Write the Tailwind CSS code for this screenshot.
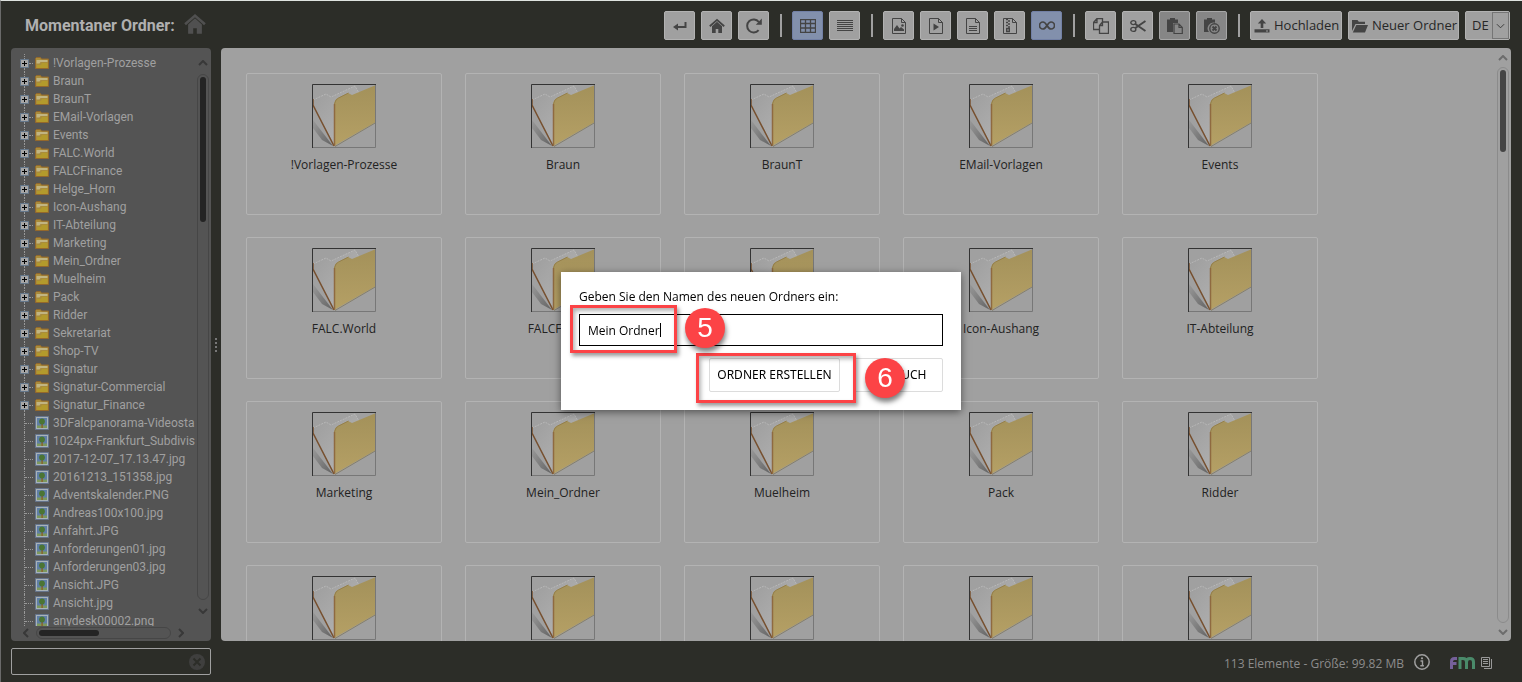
<!DOCTYPE html>
<html lang="de">
<head>
<meta charset="utf-8"/>
<meta content="width=device-width, initial-scale=1.0" name="viewport"/>
<title>Dateimanager</title>
<script src="https://cdn.jsdelivr.net/npm/@tailwindcss/browser@4"></script>
</head>
<body class="h-screen overflow-hidden flex flex-col bg-[#2c2d28] border-t border-t-[#dfe3e0] border-l border-l-[#6a6a6a] font-['Open_Sans',sans-serif] text-xs text-[#a0a0a0]">

<!-- Icons -->
<svg class="absolute w-0 h-0">
  <defs>
    <linearGradient id="gold" x2="0" y2="1"><stop stop-color="#a3915a"/><stop offset="1" stop-color="#b5a065"/></linearGradient>
    <linearGradient id="paper" x2="1" y2="1"><stop stop-color="#9c9c9c"/><stop offset="1" stop-color="#b7b7b7"/></linearGradient>
    <linearGradient id="shade" x2="1" y2="1"><stop stop-color="#999"/><stop offset="1" stop-color="#626262"/></linearGradient>
  </defs>
  <symbol id="i-enter" viewBox="0 0 16 16"><path d="M13.500 4v5H4" fill="none" stroke="currentColor" stroke-width="2"/><path d="M6 5.500 1 9l5 3.500z" fill="currentColor"/></symbol>
  <symbol id="i-home" viewBox="0 0 16 16"><path d="M8 3.800 3 8.300V15h3.700v-4h2.600v4H13V8.300z" fill="currentColor"/><path d="M.8 8.200 8 1.900l7.200 6.300" fill="none" stroke="currentColor" stroke-width="1.900"/></symbol>
  <symbol id="i-refresh" viewBox="0 0 16 16"><path d="M12.600 12.200A6.500 6.500 0 1 1 12.800 4" fill="none" stroke="currentColor" stroke-width="2"/><path d="M15.800.5v6.300H9.800z" fill="currentColor"/></symbol>
  <symbol id="i-grid" viewBox="0 0 16 14"><path d="M.5.5h15v13H.5zM.5 4.500h15M.5 9h15M5.500.5v13M10.500.5v13" fill="none" stroke="currentColor" stroke-width="1.300"/></symbol>
  <symbol id="i-list" viewBox="0 0 16 12"><path d="M0 .5h16M0 2.500h16M0 4.500h16M0 6.500h16M0 8.500h16M0 10.500h16" stroke="currentColor"/></symbol>
  <symbol id="i-image" viewBox="0 0 14 16"><path d="M.5.500h9l4 4v11H.5zM9.500.500v4h4" fill="none" stroke="currentColor"/><path d="M2 13V11l3-4 2.500 3.500L9 9l3 2.500V13z" fill="currentColor"/><circle cx="10.500" cy="7.500" r="1.300" fill="currentColor"/></symbol>
  <symbol id="i-video" viewBox="0 0 14 16"><path d="M.5.500h9l4 4v11H.5zM9.500.500v4h4" fill="none" stroke="currentColor"/><path d="M4.500 5.500v7l5.500-3.500z" fill="currentColor"/></symbol>
  <symbol id="i-text" viewBox="0 0 14 16"><path d="M.5.500h9l4 4v11H.5zM9.500.500v4h4" fill="none" stroke="currentColor"/><path d="M3 8.500h8M3 10.500h8M3 12.500h8" stroke="currentColor"/></symbol>
  <symbol id="i-zip" viewBox="0 0 14 16"><path d="M.5.500h9l4 4v11H.5zM9.500.500v4h4" fill="none" stroke="currentColor"/><path d="M3 1.500h2M5 3h2M3 4.500h2M5 6h2M3 7.500h2M5 9h2" stroke="currentColor" stroke-width="1.300"/><path d="M3.700 10.500h2.600v3H3.700z" fill="none" stroke="currentColor" stroke-width="1.400"/></symbol>
  <symbol id="i-infinity" viewBox="0 0 16 9"><path d="M8 4.500C6.800 2.500 5.600 1 4 1a3.400 3.400 0 0 0 0 7c1.600 0 2.800-1.500 4-3.500S10.400 1 12 1a3.400 3.400 0 0 1 0 7c-1.600 0-2.800-1.500-4-3.500z" fill="none" stroke="currentColor" stroke-width="1.700"/></symbol>
  <symbol id="i-copy" viewBox="0 0 16 16"><path d="M6.500 11.500h-6v-7l3.500-4h5.500V4M4 .5v4H.5M9.500 4h6v11.500h-9V7.500zM9.500 4v3.500h-3" fill="none" stroke="currentColor" stroke-width="1.300"/></symbol>
  <symbol id="i-cut" viewBox="0 0 16 14"><path d="M5.300 5 15.500 12M5.300 9 15.500 2" stroke="currentColor" stroke-width="2"/><ellipse cx="3.300" cy="3.600" rx="2.500" ry="2" fill="none" stroke="currentColor" stroke-width="1.400"/><ellipse cx="3.300" cy="10.400" rx="2.500" ry="2" fill="none" stroke="currentColor" stroke-width="1.400"/></symbol>
  <symbol id="i-paste" viewBox="0 0 16 16"><path d="M0 1.500h3V0h5v1.500h3V5H6v9H0z" fill="currentColor"/><path d="M7 6h5l3.300 3.500v6H7zM12 6v3.500h3.300" fill="none" stroke="currentColor" stroke-width="1.200"/></symbol>
  <symbol id="i-clear" viewBox="0 0 16 16"><path d="M0 1.500h3V0h5v1.500h3v3.200A5.800 5.800 0 0 0 5 14H0z" fill="currentColor"/><circle cx="10.500" cy="10.500" r="4.700" fill="none" stroke="currentColor" stroke-width="1.400"/><path d="m8.500 8.500 4 4m0-4-4 4" stroke="currentColor" stroke-width="1.900"/></symbol>
  <symbol id="i-upload" viewBox="0 0 16 14"><path d="M8 0 3.800 4.500h2.900V9h2.600V4.500h2.900zM.5 10.200h15v3.300H.5z" fill="currentColor"/><path d="M12 12h2" stroke="#a0a0a0"/></symbol>
  <symbol id="i-open" viewBox="0 0 16 14"><path d="M0 12V1h5.500l1.300 1.700H13V5H3.500z" fill="currentColor"/><path d="M4.300 6H16l-3 7.500H.8z" fill="currentColor"/></symbol>
  <symbol id="i-chevron" viewBox="0 0 10 6"><path d="m1 1 4 4 4-4" fill="none" stroke="currentColor" stroke-width="2"/></symbol>
  <symbol id="i-folder" viewBox="0 0 14 12"><path d="M.5 1.500 1.500.5h4l1 1.500h7v9.500H.5z" fill="#a98c3c" stroke="#94682b"/><path d="M1.500 3h11v2h-7l-1 1.500h-3z" fill="#c1b482"/><path d="M2 8h4l1-2h5.500v5H2z" fill="#b39a2c"/></symbol>
  <symbol id="i-pic" viewBox="0 0 14 14"><path d="M.5.500h13v13H.5z" fill="#a9b2b8" stroke="#65748c"/><path d="M2 2h10v10H2z" fill="#5f7ea6"/><path d="M2 9.500h10V12H2z" fill="#7d985c"/><path d="M6.400 8h1.400v4H6.400z" fill="#8b5c2a"/><circle cx="7" cy="5.500" r="2.900" fill="#4b7534"/></symbol>
  <symbol id="i-bigfolder" viewBox="0 0 64 64">
    <path d="M1 36 21 62 10 56 1 44z" fill="url(#shade)"/>
    <path d="M1 16 14 10l5 3L43 2l5 8-25 52L1 21z" fill="url(#paper)"/>
    <path d="M1 16 14 10l5 3L43 2l4 7" fill="none" stroke="#b8b8b8" stroke-dasharray="2 1"/>
    <path d="M1 15v6l21 41" fill="none" stroke="#77502f" stroke-width="1.500"/>
    <path d="M22 62V20q1-5 4-6l10-5 4 2L64 1v37z" fill="url(#gold)"/>
    <path d="M22.500 62V20" fill="none" stroke="#8f6a40" stroke-width="1.500"/>
    <path d="M22.500 20q1-5 4-6l10-5" fill="none" stroke="#95804c"/>
    <path d="M23 62.500 64 38.500" stroke="#857f6c"/>
    <path d="M.5 64V.5H64" fill="none" stroke="#333"/><path d="M63.500 1v62.500H1" fill="none" stroke="#777"/>
  </symbol>
</svg>

<header class="h-[47px] shrink-0 flex items-center pl-6 pr-3 pt-[2px]">
  <h1 class="text-base font-bold font-['Roboto',sans-serif] text-[#b0b0b0]">Momentaner Ordner:</h1>
  <svg class="w-[22px] h-[22px] ml-[9px] mb-1 text-[#505050]"><use href="#i-home"/></svg>
  <div id="toolbar" class="ml-auto flex items-center gap-[6px] text-[13px] text-[#272727]"></div>
</header>

<main class="flex-1 min-h-0 flex pl-[10px] pr-[11px]">
  <aside class="w-[200px] shrink-0 flex flex-col rounded-sm bg-[#545454] text-[#a0a0a0] font-['Roboto',sans-serif]">
    <div class="flex-1 min-h-0 flex">
      <ul id="tree" class="flex-1 min-w-0 overflow-hidden pt-[6px] pl-[9px]"></ul>
      <div class="w-[14px] mr-[1px] pt-3 flex flex-col items-center gap-2 text-[#383838]">
        <svg class="w-[10px] h-[6px] rotate-180"><use href="#i-chevron"/></svg>
        <div class="w-3 flex-1 rounded-full border border-[#464646] p-[2px]"><div class="h-[145px] rounded-full bg-[#242424]"></div></div>
        <svg class="w-[10px] h-[6px] mb-3"><use href="#i-chevron"/></svg>
      </div>
    </div>
    <div class="h-[15px] flex items-center pl-[10px] gap-[5px] pb-[2px] text-[#383838]">
      <svg class="w-[10px] h-[6px] rotate-90"><use href="#i-chevron"/></svg>
      <div class="w-[135px] h-3 rounded-full border border-[#464646] p-[2px]"><div class="w-[60px] h-[6px] rounded-full bg-[#242424]"></div></div>
      <svg class="w-[10px] h-[6px] -rotate-90"><use href="#i-chevron"/></svg>
    </div>
  </aside>
  <div class="w-[10px] flex items-center justify-center"><div class="h-[14px] border-l-2 border-dotted border-[#777]"></div></div>
  <section class="flex-1 min-w-0 flex rounded-sm bg-[#a0a0a0] overflow-hidden">
    <div id="files" class="flex-1 overflow-hidden flex flex-wrap content-start gap-x-[23px] gap-y-[22px] pt-[25px] pl-[25px] pr-[150px]"></div>
    <div class="w-[14px] mr-[1px] pt-[7px] flex flex-col items-center gap-[6px] text-[#6c6c6c]">
      <svg class="w-[10px] h-[6px] rotate-180"><use href="#i-chevron"/></svg>
      <div class="w-3 flex-1 rounded-full border border-[#8b8b8b] p-[2px]"><div class="h-[82px] rounded-full bg-[#444]"></div></div>
      <svg class="w-[10px] h-[6px] mb-[6px]"><use href="#i-chevron"/></svg>
    </div>
  </section>
</main>

<footer class="h-[41px] shrink-0 flex items-center pl-[10px] pr-[30px]">
  <div class="w-[200px] h-[27px] flex items-center border border-[#a0a0a0] rounded-xs pr-[5px]">
    <input id="filter" type="text" aria-label="Filter" class="flex-1 min-w-0 h-full px-2 outline-none"/>
    <button aria-label="Filter löschen"><svg class="w-4 h-4" viewBox="0 0 16 16"><circle cx="8" cy="8" r="8" fill="#3f3f3e"/><path d="m4.500 4.500 7 7m0-7-7 7" stroke="#2c2d28" stroke-width="2"/></svg></button>
  </div>
  <div class="ml-auto flex items-center">
    <span class="text-[#8c8c8c] pt-1">113 Elemente - Größe: 99.82 MB</span>
    <button aria-label="Info" class="ml-[10px]"><svg class="w-4 h-4" viewBox="0 0 16 16"><circle cx="8" cy="8" r="7.200" fill="none" stroke="#a0a0a0" stroke-width="1.500"/><path d="M6.500 7h2v4.500M6.300 11.800h3.600" fill="none" stroke="#a0a0a0" stroke-width="1.400"/><circle cx="8" cy="4.300" r="1.100" fill="#a0a0a0"/></svg></button>
    <!-- Brand mark -->
    <svg class="w-[25px] h-3 ml-5 mt-[2px]" viewBox="0 0 25 12" fill="none" stroke-width="3"><path d="M1.500 12V4.500q0-3 3-3H7M1.500 6.500H6.500" stroke="#75609a"/><path d="M10 12V1.500h3q3.500 0 3.500 3.500v7M16.500 5q0-3.500 3.500-3.500T23.500 5v7" stroke="#4a8a6a"/></svg>
    <svg class="w-[11px] h-3 ml-[6px] mt-[2px]" viewBox="0 0 11 12" fill="none" stroke="#999"><path d="M.5.500h8v9h-8zM2 2.500h5M2 4.500h5M2 6.500h5M10.500 2v9.500H3"/></svg>
  </div>
</footer>

<!-- New folder prompt -->
<div class="fixed inset-0 flex items-center justify-center text-black">
  <form role="dialog" class="relative w-[400px] bg-white px-[18px] pt-4 pb-[18px] shadow-[0_2px_8px_rgba(0,0,0,0.500)]" onsubmit="return false">
    <label for="folderName" class="block leading-[18px] mb-2">Geben Sie den Namen des neuen Ordners ein:</label>
    <input id="folderName" type="text" value="Mein Ordner" class="block w-full h-8 border border-black px-2 outline-none"/>
    <div class="flex justify-end gap-[14px] mt-3 font-['Noto_Sans',sans-serif]">
      <button type="submit" class="h-[34px] w-[131px] border border-[#dcdcdc] rounded-xs whitespace-nowrap">ORDNER ERSTELLEN</button>
      <button type="button" class="h-[34px] w-[89px] border border-[#dcdcdc] rounded-xs">ABBRUCH</button>
    </div>
    <!-- text caret -->
    <div class="absolute left-[99px] top-[51px] w-px h-[14px] bg-black"></div>
    <!-- step markers -->
    <div class="absolute left-[9px] top-[33px] w-[107px] h-12 border-3 border-[#fc4346] shadow-[2px_3px_4px_rgba(0,0,0,0.400),inset_2px_3px_4px_rgba(0,0,0,0.300)]"></div>
    <div class="absolute left-[135px] top-[81px] w-40 h-[50px] border-3 border-[#fc4346] shadow-[2px_3px_4px_rgba(0,0,0,0.400),inset_2px_3px_4px_rgba(0,0,0,0.300)]"></div>
    <div class="absolute left-[124px] top-9 size-10 rounded-full bg-[#fc4346] flex items-center justify-center text-white text-[28px] font-['Liberation_Sans',sans-serif] shadow-[1px_4px_5px_rgba(0,0,0,0.500)]">5</div>
    <div class="absolute left-[304px] top-[86px] size-10 rounded-full bg-[#fc4346] flex items-center justify-center text-white text-[28px] font-['Liberation_Sans',sans-serif] shadow-[1px_4px_5px_rgba(0,0,0,0.500)]">6</div>
  </form>
</div>

<script>
  const folders = ["!Vorlagen-Prozesse", "Braun", "BraunT", "EMail-Vorlagen", "Events", "FALC.World", "FALCFinance", "Helge_Horn", "Icon-Aushang", "IT-Abteilung", "Marketing", "Mein_Ordner", "Muelheim", "Pack", "Ridder", "Sekretariat", "Shop-TV", "Signatur", "Signatur-Commercial", "Signatur_Finance"];
  const images = ["3DFalcpanorama-Videosta", "1024px-Frankfurt_Subdivis", "2017-12-07_17.13.47.jpg", "20161213_151358.jpg", "Adventskalender.PNG", "Andreas100x100.jpg", "Anfahrt.JPG", "Anforderungen01.jpg", "Anforderungen03.jpg", "Ansicht.JPG", "Ansicht.jpg", "anydesk00002.png"];

  // [icon, label, svg size, state]
  const tools = [
    ["enter", "Zurück", "w-4 h-4"], ["home", "Start", "w-4 h-4"], ["refresh", "Aktualisieren", "w-4 h-4"], null,
    ["grid", "Kacheln", "w-4 h-[14px]", "on"], ["list", "Liste", "w-4 h-3"], null,
    ["image", "Bilder", "w-[14px] h-4"], ["video", "Videos", "w-[14px] h-4"], ["text", "Dokumente", "w-[14px] h-4"], ["zip", "Archive", "w-[14px] h-4"], ["infinity", "Alle", "w-4 h-[9px]", "on"], null,
    ["copy", "Kopieren", "w-4 h-4"], ["cut", "Ausschneiden", "w-4 h-[14px]"], ["paste", "Einfügen", "w-4 h-4", "off"], ["clear", "Leeren", "w-4 h-4", "off"], null
  ];
  const look = {
    on: "bg-[#8290ac] border-[#7280a5]",
    off: "bg-[#868686] border-[#a6a6a6]",
    normal: "bg-[#a0a0a0] border-[#b2b2b2]"
  };

  document.getElementById("toolbar").innerHTML = tools.map(t => t
    ? `<button aria-label="${t[1]}" class="w-[31px] h-[29px] flex items-center justify-center border rounded-xs text-[#444] ${look[t[3] || "normal"]}"><svg class="${t[2]}"><use href="#i-${t[0]}"/></svg></button>`
    : `<div class="w-[2px] h-[23px] bg-[#a0a0a0] ml-[5px] mr-1"></div>`
  ).join("") + `
    <button class="w-[92px] h-[29px] flex items-center gap-1 px-[3px] border rounded-xs bg-[#a0a0a0] border-[#b2b2b2]"><svg class="w-4 h-[14px] shrink-0 text-[#444]"><use href="#i-upload"/></svg>Hochladen</button>
    <button class="w-[111px] h-[29px] flex items-center gap-1 px-[3px] border rounded-xs bg-[#a0a0a0] border-[#b2b2b2] whitespace-nowrap"><svg class="w-4 h-[14px] shrink-0 text-[#444]"><use href="#i-open"/></svg>Neuer Ordner</button>
    <div class="relative w-[45px] h-[29px] border rounded-xs bg-[#a0a0a0] border-[#b2b2b2]">
      <select aria-label="Sprache" class="w-full h-full appearance-none pl-[6px] outline-none"><option>DE</option></select>
      <span class="absolute right-0 inset-y-0 w-[17px] border border-[#757575] flex items-center justify-center pointer-events-none"><svg class="w-[9px] h-[6px]" viewBox="0 0 10 6"><path d="m1 1 4 4 4-4" fill="none" stroke="#333"/></svg></span>
    </div>`;

  document.getElementById("tree").innerHTML = folders.map(name => `
    <li class="h-[18px] flex items-center whitespace-nowrap">
      <span class="w-[9px] h-full flex flex-col items-center"><i class="flex-1 border-l border-dotted border-[#999]"></i><svg class="w-[9px] h-[9px] shrink-0" viewBox="0 0 9 9"><path d="M.5.500h8v8h-8z" fill="#a6a6a6" stroke="#63768a"/><path d="M2 4.500h5M4.500 2v5" stroke="#000"/></svg><i class="flex-1 border-l border-dotted border-[#999]"></i></span>
      <i class="w-[4px] mr-[2px] border-t border-dotted border-[#999]"></i>
      <svg class="w-[14px] h-3 shrink-0 mr-1"><use href="#i-folder"/></svg>${name}
    </li>`).join("") + images.map(name => `
    <li class="h-[18px] flex items-center whitespace-nowrap pl-1">
      <i class="h-full shrink-0 border-l border-dotted border-[#999]"></i><i class="w-2 shrink-0 mr-[2px] border-t border-dotted border-[#999]"></i>
      <svg class="w-[14px] h-[14px] shrink-0 mr-1"><use href="#i-pic"/></svg>${name}
    </li>`).join("");

  document.getElementById("files").innerHTML = folders.map(name => `
    <figure class="w-[196px] h-[142px] border border-[#b3b3b3] rounded-xs flex flex-col items-center pt-[10px]">
      <svg class="w-16 h-16"><use href="#i-bigfolder"/></svg>
      <figcaption class="mt-2 leading-[18px] text-[#222]">${name}</figcaption>
    </figure>`).join("");
</script>
</body>
</html>
